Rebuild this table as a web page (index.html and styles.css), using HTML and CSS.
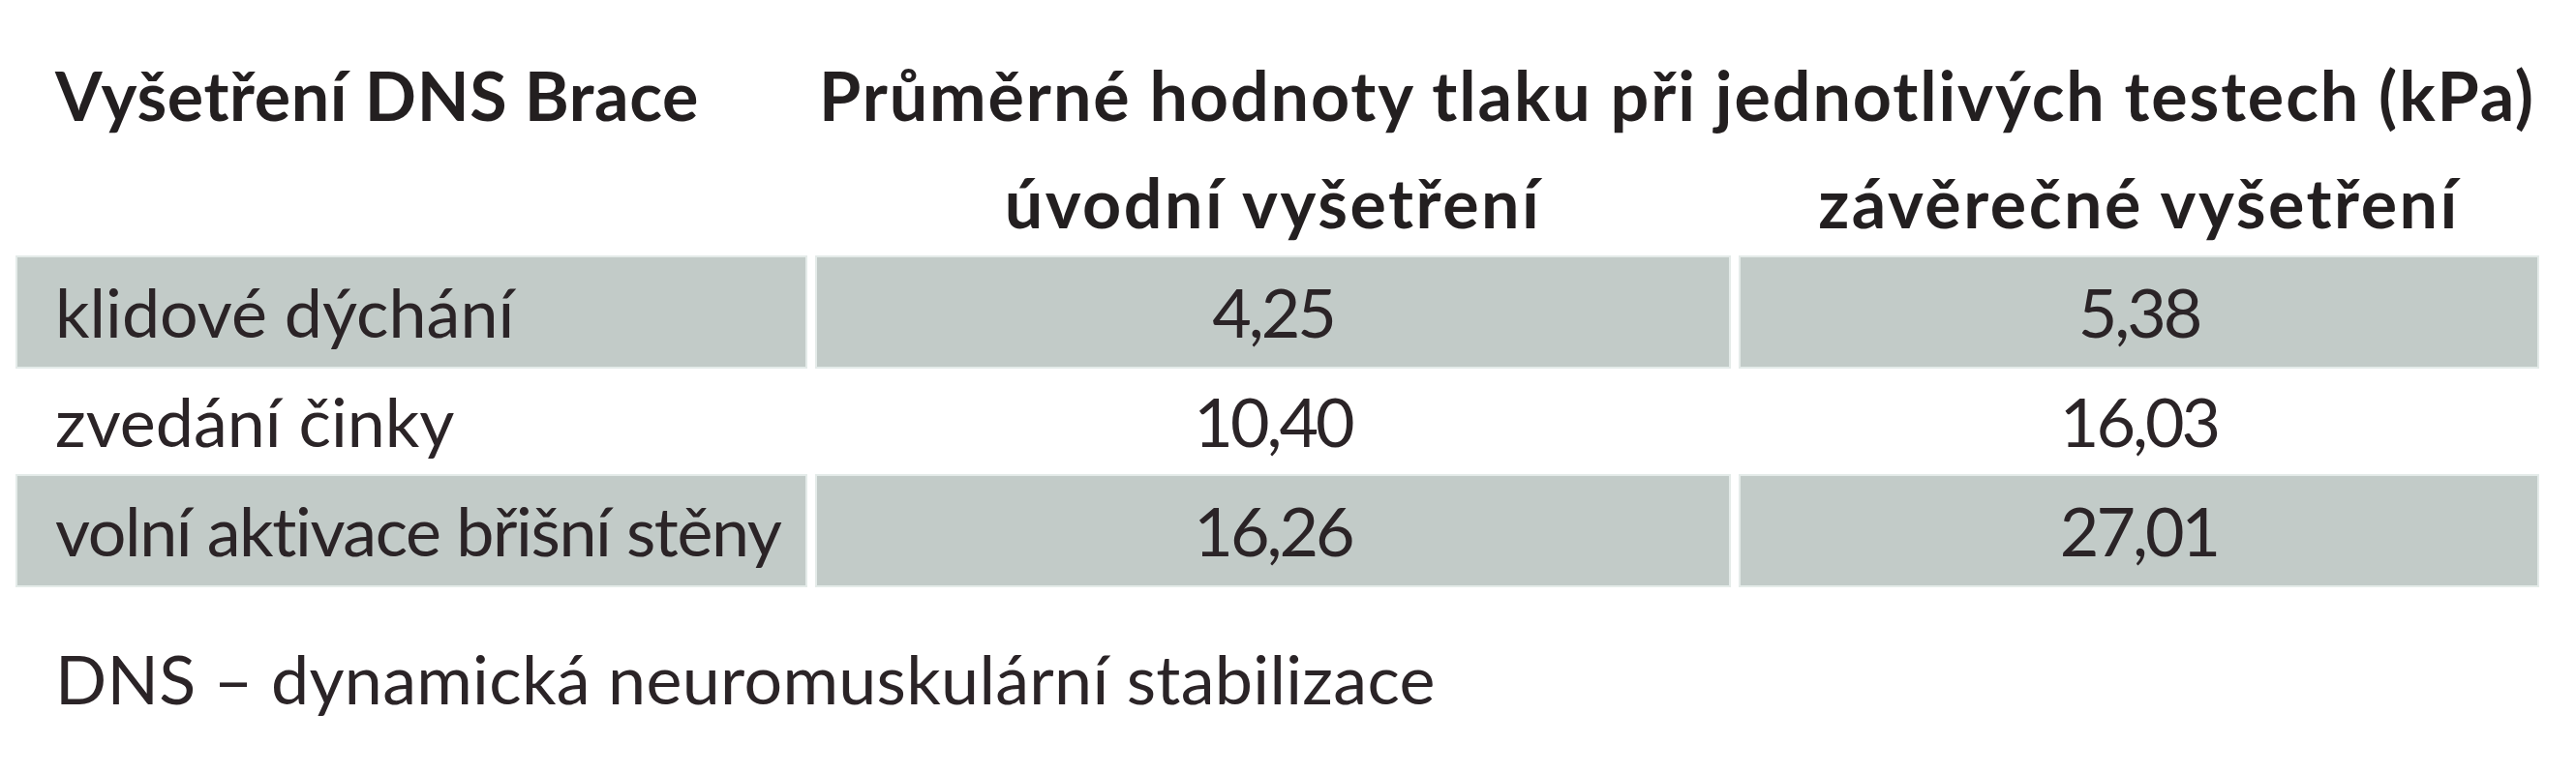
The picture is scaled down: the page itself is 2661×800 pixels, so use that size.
FILE: index.html
```
<!DOCTYPE html>
<html lang="cs">
<head>
<meta charset="utf-8">
<title>Vyšetření DNS Brace</title>
<link rel="stylesheet" href="styles.css">
</head>
<body>
<div class="page">
  <div class="table">
    <div class="cell head first top">Vyšetření DNS Brace</div>
    <div class="cell head span top">Průměrné hodnoty tlaku při jednotlivých testech (kPa)</div>

    <div class="cell head first"></div>
    <div class="cell head sub">úvodní vyšetření</div>
    <div class="cell head sub">závěrečné vyšetření</div>

    <div class="cell shaded first">klidové dýchání</div>
    <div class="cell shaded num">4,25</div>
    <div class="cell shaded num">5,38</div>

    <div class="cell first">zvedání činky</div>
    <div class="cell num">10,40</div>
    <div class="cell num">16,03</div>

    <div class="cell shaded first tight">volní aktivace břišní stěny</div>
    <div class="cell shaded num">16,26</div>
    <div class="cell shaded num">27,01</div>
  </div>
  <p class="note">DNS – dynamická neuromuskulární stabilizace</p>
</div>
</body>
</html>
```
FILE: styles.css
```
html, body {
  margin: 0;
  padding: 0;
  background: #ffffff;
}

body {
  font-family: Lato, "Open Sans", "Liberation Sans", sans-serif;
  font-size: 70px;
  color: #2b2427;
}

.page {
  padding: 40px 0 0 18px;
}

.table {
  display: grid;
  grid-template-columns: 814px 942px 823px;
  grid-auto-rows: 113px;
  column-gap: 12px;
}

.cell {
  line-height: 113px;
  white-space: nowrap;
}

.first {
  padding-left: 39px;
}

.tight {
  letter-spacing: -1.4px;
}

.num {
  text-align: center;
  letter-spacing: -3px;
}

.head {
  font-weight: 700;
  color: #231f20;
  letter-spacing: 0.6px;
}

.top {
  padding-top: 3px;
  line-height: 110px;
}

.span {
  grid-column: 2 / span 2;
  text-align: center;
  letter-spacing: 1.9px;
}

.sub {
  text-align: center;
  letter-spacing: 2.5px;
}

.shaded {
  background: #c2cbc8;
  box-shadow: 0 0 0 2px #e4ebe9;
}

.note {
  margin: 40px 0 0 39px;
  line-height: 113px;
  letter-spacing: 0.3px;
  color: #2b2427;
}
```
